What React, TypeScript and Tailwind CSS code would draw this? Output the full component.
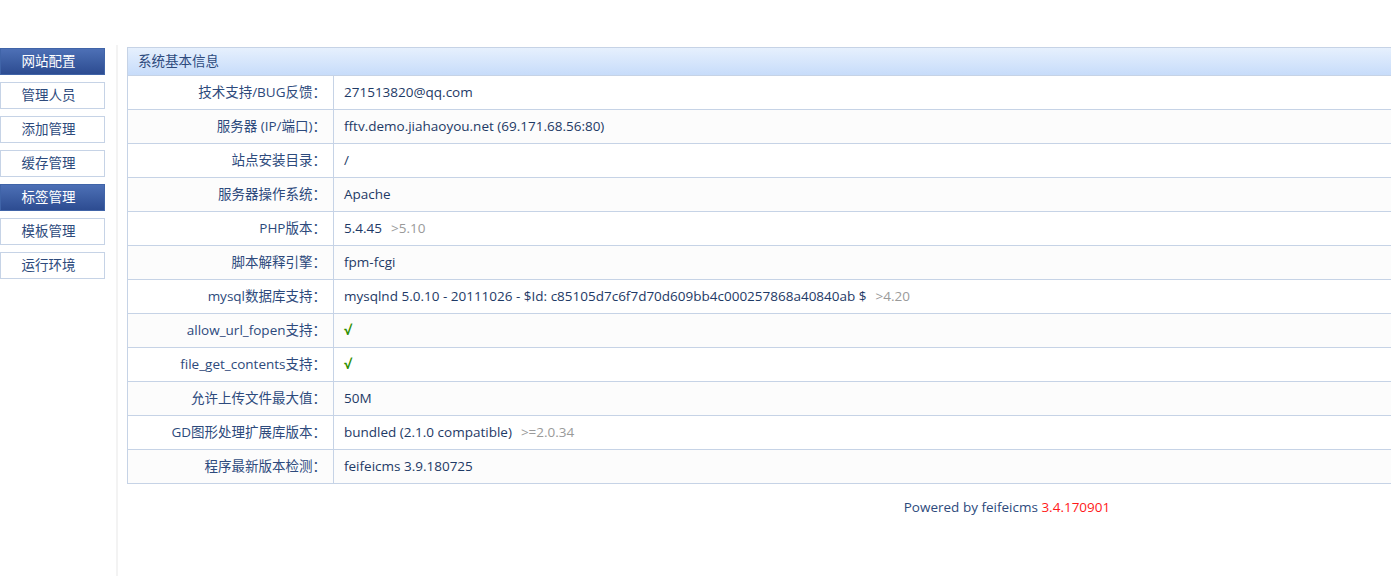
const menu = [
  { name: "网站配置", head: true },
  { name: "管理人员" },
  { name: "添加管理" },
  { name: "缓存管理" },
  { name: "标签管理", head: true },
  { name: "模板管理" },
  { name: "运行环境" },
];

const rows: { label: string; value: string; hint?: string; ok?: boolean }[] = [
  { label: "技术支持/BUG反馈：", value: "271513820@qq.com" },
  { label: "服务器 (IP/端口)：", value: "fftv.demo.jiahaoyou.net (69.171.68.56:80)" },
  { label: "站点安装目录：", value: "/" },
  { label: "服务器操作系统：", value: "Apache" },
  { label: "PHP版本：", value: "5.4.45", hint: ">5.10" },
  { label: "脚本解释引擎：", value: "fpm-fcgi" },
  {
    label: "mysql数据库支持：",
    value: "mysqlnd 5.0.10 - 20111026 - $Id: c85105d7c6f7d70d609bb4c000257868a40840ab $",
    hint: ">4.20",
  },
  { label: "allow_url_fopen支持：", value: "√", ok: true },
  { label: "file_get_contents支持：", value: "√", ok: true },
  { label: "允许上传文件最大值：", value: "50M" },
  { label: "GD图形处理扩展库版本：", value: "bundled (2.1.0 compatible)", hint: ">=2.0.34" },
  { label: "程序最新版本检测：", value: "feifeicms 3.9.180725" },
];

export default function App() {
  return (
    <div
      className="flex h-[576px] w-full overflow-hidden bg-white text-[13.5px]"
      style={{ fontFamily: '"Open Sans", "Noto Sans CJK SC", sans-serif' }}
    >
      {/* left menu */}
      <div className="flex w-[116px] shrink-0 flex-col pt-[48px]">
        <ul className="flex w-[105px] flex-col gap-[7px]">
          {menu.map((m) => (
            <li
              key={m.name}
              className={
                m.head
                  ? "flex h-[27px] items-center justify-center border border-[#4064a8] bg-gradient-to-b from-[#4d70b6] to-[#2d4c91] pr-[8px] text-white"
                  : "flex h-[27px] items-center justify-center border border-[#c6d3e6] bg-white pr-[8px] text-[#2d4a7c]"
              }
            >
              {m.name}
            </li>
          ))}
        </ul>
      </div>
      <div className="mt-[45px] w-[2px] shrink-0 bg-[#f3f3f3]" />

      {/* main panel */}
      <div className="flex min-w-0 flex-1 flex-col pl-[9px] pt-[47px]">
        <div className="w-[1760px] border-l border-[#c6d3e6]">
          <div className="flex h-[29px] items-center border-y border-[#c6d3e6] bg-gradient-to-b from-[#e6f0fd] to-[#c7dcfa] pl-[10px] text-[#2d4a7c]">
            系统基本信息
          </div>
          {rows.map((r, i) => (
            <div
              key={r.label}
              className={
                "flex h-[34px] border-b border-[#c6d3e6] " + (i % 2 === 1 ? "bg-[#fcfcfc]" : "bg-white")
              }
            >
              <div className="flex w-[206px] shrink-0 items-center justify-end border-r border-[#c6d3e6] pr-[7px] text-[#2d4a7c]">
                {r.label}
              </div>
              <div className="flex items-center pl-[10px] text-[#1e3a66]">
                <span className={r.ok ? "font-bold text-[#2f8f00]" : ""}>{r.value}</span>
                {r.hint && <span className="ml-[9px] text-[#9a9a9a]">{r.hint}</span>}
              </div>
            </div>
          ))}
        </div>
        <div className="w-[1760px] pt-[13px] text-center text-[#2d4a7c]">
          Powered by feifeicms <span className="text-[#ff1a1a]">3.4.170901</span>
        </div>
      </div>
    </div>
  );
}
